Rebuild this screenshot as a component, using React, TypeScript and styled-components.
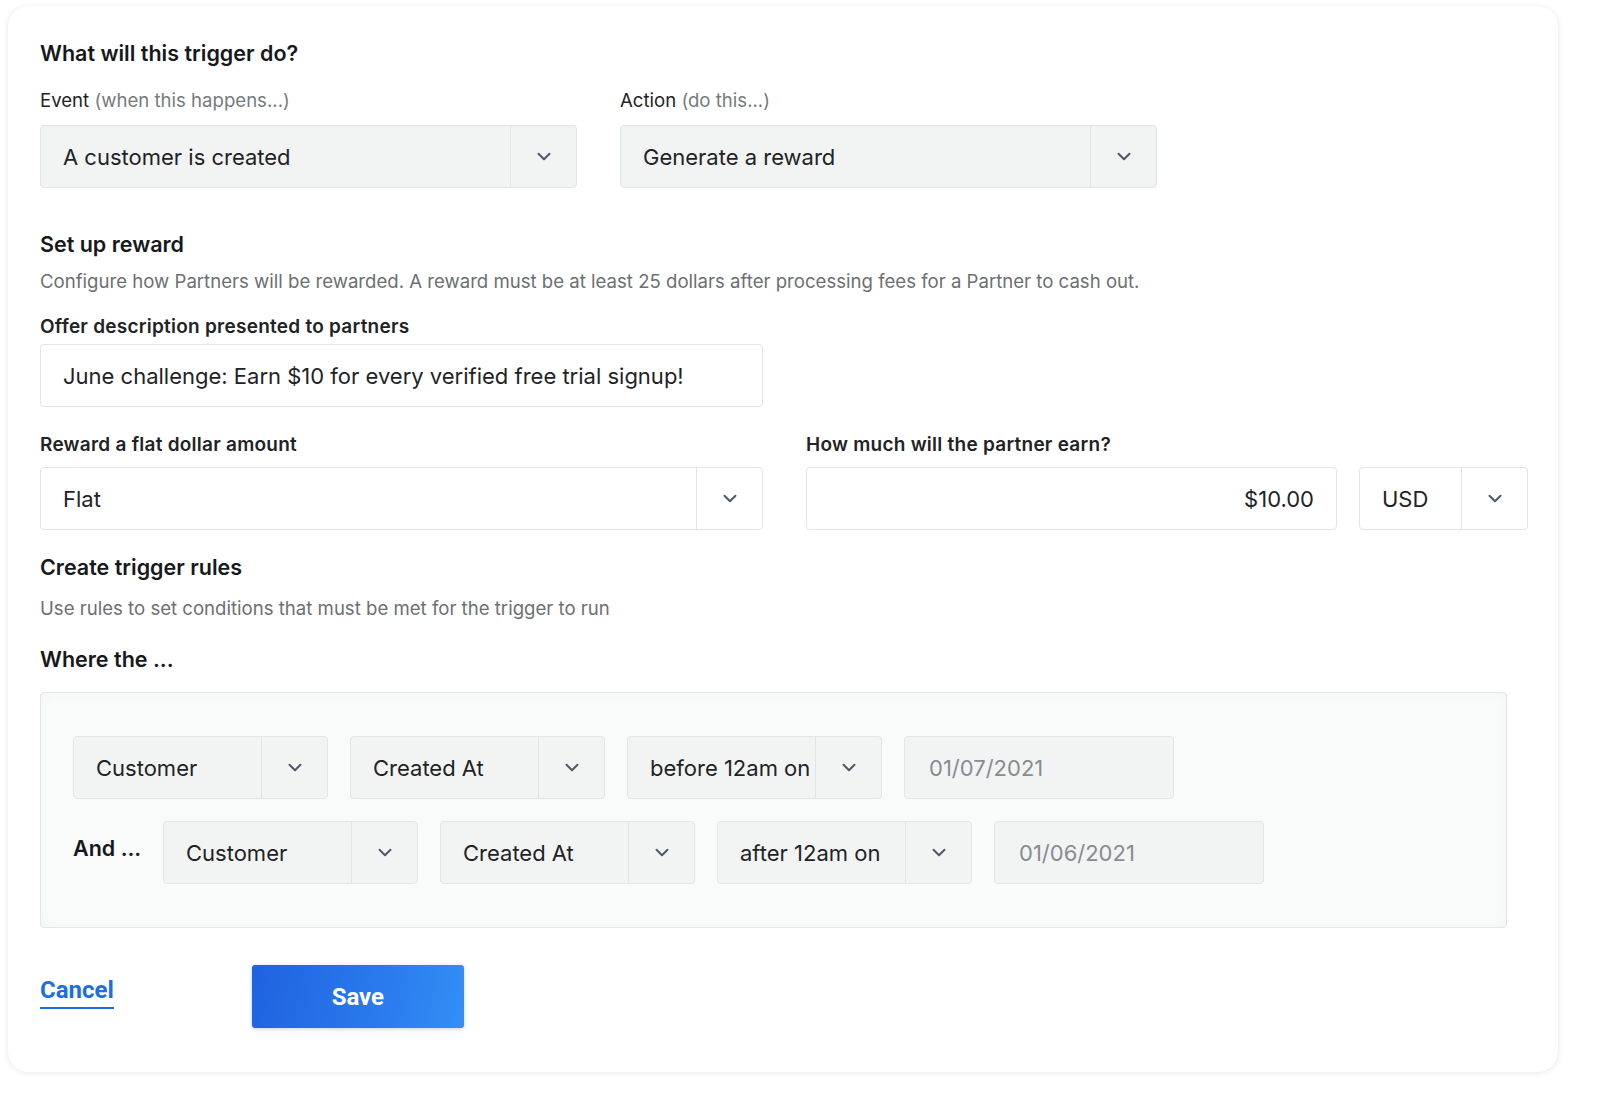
import React from 'react';
import styled, { createGlobalStyle } from 'styled-components';

const GlobalStyle = createGlobalStyle`
  html, body {
    margin: 0;
    padding: 0;
    background: #ffffff;
  }
  body {
    font-family: Inter, "Noto Sans", "Liberation Sans", sans-serif;
    color: #1f2326;
    -webkit-font-smoothing: antialiased;
  }
`;

const Page = styled.div`
  padding: 6px 42px 30px 8px;
`;

const Card = styled.div`
  width: 1550px;
  box-sizing: border-box;
  background: #ffffff;
  border-radius: 20px;
  box-shadow: 0 1px 6px rgba(0, 0, 0, 0.09), 0 0 1px rgba(0, 0, 0, 0.06);
  padding: 35px 30px 44px 32px;
  display: flex;
  flex-direction: column;
`;

const Heading = styled.h2<{ $mt?: number }>`
  margin: ${(p) => p.$mt ?? 0}px 0 0;
  font-size: 21.5px;
  line-height: 24px;
  font-weight: 600;
  color: #16191b;
`;

const Description = styled.p<{ $mt?: number }>`
  margin: ${(p) => p.$mt ?? 0}px 0 0;
  font-size: 18.6px;
  line-height: 22px;
  color: #6b7073;
`;

const Label = styled.div<{ $mt?: number; $mb?: number; $strong?: boolean }>`
  margin: ${(p) => p.$mt ?? 0}px 0 ${(p) => p.$mb ?? 0}px;
  font-size: ${(p) => (p.$strong ? 19 : 18.6)}px;
  letter-spacing: ${(p) => (p.$strong ? 0.25 : 0)}px;
  line-height: 22px;
  font-weight: ${(p) => (p.$strong ? 600 : 400)};
  color: #1f2326;
`;

const Hint = styled.span`
  color: #767b7e;
`;

const Row = styled.div<{ $gap: number }>`
  display: flex;
  align-items: flex-start;
  gap: ${(p) => p.$gap}px;
`;

const Field = styled.div<{ $w: number }>`
  width: ${(p) => p.$w}px;
  display: flex;
  flex-direction: column;
`;

const SelectBox = styled.div<{ $w?: number; $white?: boolean }>`
  width: ${(p) => (p.$w ? `${p.$w}px` : '100%')};
  height: 63px;
  box-sizing: border-box;
  display: flex;
  align-items: stretch;
  background: ${(p) => (p.$white ? '#ffffff' : '#f2f4f4')};
  border: 1px solid #e2e5e6;
  border-radius: 4px;
  flex-shrink: 0;
`;

const SelectValue = styled.div`
  flex: 1;
  display: flex;
  align-items: center;
  padding-left: 22px;
  font-size: 22px;
  color: #1f2326;
  white-space: nowrap;
  overflow: hidden;
`;

const Caret = styled.div`
  width: 65px;
  border-left: 1px solid #e2e5e6;
  display: flex;
  align-items: center;
  justify-content: center;
  color: #4c5968;
`;

const TextInput = styled.div<{ $w?: number; $align?: 'left' | 'right'; $muted?: boolean }>`
  width: ${(p) => (p.$w ? `${p.$w}px` : '100%')};
  height: 63px;
  box-sizing: border-box;
  display: flex;
  align-items: center;
  justify-content: ${(p) => (p.$align === 'right' ? 'flex-end' : 'flex-start')};
  padding: 0 22px 0 ${(p) => (p.$muted ? 24 : 22)}px;
  background: ${(p) => (p.$muted ? '#f2f4f4' : '#ffffff')};
  border: 1px solid #e2e5e6;
  border-radius: 4px;
  font-size: 22px;
  color: ${(p) => (p.$muted ? '#868c91' : '#1f2326')};
  white-space: nowrap;
  flex-shrink: 0;
`;

const RulesBox = styled.div`
  margin-top: 21px;
  width: 1467px;
  box-sizing: border-box;
  padding: 43px 32px;
  background: #f9fafa;
  border: 1px solid #e3e6e6;
  border-radius: 4px;
  box-shadow: inset 0 0 14px rgba(0, 0, 0, 0.025);
  display: flex;
  flex-direction: column;
  gap: 22px;
`;

const RuleRow = styled.div`
  display: flex;
  align-items: center;
  gap: 22px;
`;

const AndLabel = styled.div`
  width: 68px;
  font-size: 21.5px;
  font-weight: 600;
  color: #16191b;
  white-space: nowrap;
  margin-top: -10px;
`;

const Actions = styled.div`
  margin-top: 37px;
  display: flex;
  align-items: center;
  gap: 138px;
`;

const CancelLink = styled.a`
  font-family: Roboto, Inter, sans-serif;
  font-size: 24px;
  line-height: 28px;
  font-weight: 700;
  color: #1c6fe3;
  text-decoration: none;
  border-bottom: 2px solid #1c6fe3;
  padding-bottom: 3px;
  margin-top: -8px;
  cursor: pointer;
`;

const SaveButton = styled.button`
  width: 212px;
  height: 63px;
  border: none;
  border-radius: 3px;
  background: linear-gradient(100deg, #1f62df 0%, #2a7aed 60%, #338ff6 100%);
  box-shadow: 0 1px 4px rgba(20, 70, 160, 0.25);
  color: #ffffff;
  font-family: Roboto, Inter, sans-serif;
  font-size: 24px;
  font-weight: 700;
  cursor: pointer;
`;

const Chevron = () => (
  <svg width="14" height="9" viewBox="0 0 14 9" fill="none">
    <path d="M1.5 1.8l5.5 5.4 5.5-5.4" stroke="currentColor" strokeWidth="2" strokeLinecap="round" strokeLinejoin="round" />
  </svg>
);

type SelectProps = { value: string; width?: number; white?: boolean };

const Select = ({ value, width, white }: SelectProps) => (
  <SelectBox $w={width} $white={white}>
    <SelectValue>{value}</SelectValue>
    <Caret>
      <Chevron />
    </Caret>
  </SelectBox>
);

type Rule = { object: string; field: string; op: string; date: string };

const rules: Rule[] = [
  { object: 'Customer', field: 'Created At', op: 'before 12am on', date: '01/07/2021' },
  { object: 'Customer', field: 'Created At', op: 'after 12am on', date: '01/06/2021' },
];

const RuleLine = ({ rule, index }: { rule: Rule; index: number }) => (
  <RuleRow>
    {index > 0 && <AndLabel>And ...</AndLabel>}
    <Select value={rule.object} width={255} />
    <Select value={rule.field} width={255} />
    <Select value={rule.op} width={255} />
    <TextInput $w={270} $muted>
      {rule.date}
    </TextInput>
  </RuleRow>
);

export default function App() {
  return (
    <Page>
      <GlobalStyle />
      <Card>
        <Heading>What will this trigger do?</Heading>
        <Row $gap={43} style={{ marginTop: 24 }}>
          <Field $w={537}>
            <Label $mb={14}>
              Event <Hint>(when this happens...)</Hint>
            </Label>
            <Select value="A customer is created" />
          </Field>
          <Field $w={537}>
            <Label $mb={14}>
              Action <Hint>(do this...)</Hint>
            </Label>
            <Select value="Generate a reward" />
          </Field>
        </Row>

        <Heading $mt={44}>Set up reward</Heading>
        <Description $mt={14}>
          Configure how Partners will be rewarded. A reward must be at least 25 dollars after processing fees for a
          Partner to cash out.
        </Description>
        <Label $strong $mt={24} $mb={6}>
          Offer description presented to partners
        </Label>
        <TextInput $w={723}>June challenge: Earn $10 for every verified free trial signup!</TextInput>

        <Row $gap={43} style={{ marginTop: 27 }}>
          <Field $w={723}>
            <Label $strong $mb={11}>
              Reward a flat dollar amount
            </Label>
            <Select value="Flat" white />
          </Field>
          <Field $w={722}>
            <Label $strong $mb={11}>
              How much will the partner earn?
            </Label>
            <Row $gap={22}>
              <TextInput $w={531} $align="right">
                $10.00
              </TextInput>
              <Select value="USD" width={169} white />
            </Row>
          </Field>
        </Row>

        <Heading $mt={25}>Create trigger rules</Heading>
        <Description $mt={18}>Use rules to set conditions that must be met for the trigger to run</Description>
        <Heading $mt={28}>Where the ...</Heading>
        <RulesBox>
          {rules.map((rule, i) => (
            <RuleLine key={i} rule={rule} index={i} />
          ))}
        </RulesBox>

        <Actions>
          <CancelLink>Cancel</CancelLink>
          <SaveButton>Save</SaveButton>
        </Actions>
      </Card>
    </Page>
  );
}
